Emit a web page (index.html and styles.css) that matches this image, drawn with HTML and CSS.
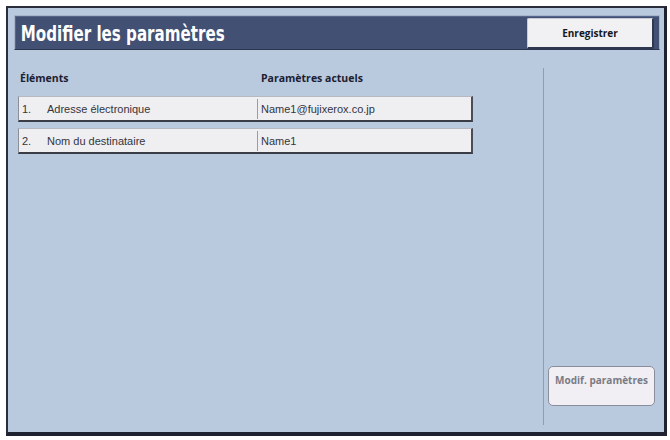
FILE: index.html
```html
<!DOCTYPE html>
<html lang="fr">
<head>
<meta charset="utf-8">
<title>Modifier les paramètres</title>
<link rel="stylesheet" href="styles.css">
</head>
<body>
<div class="frame">
  <div class="screen">
    <div class="header">
      <h1 class="title">Modifier les paramètres</h1>
      <button class="btn-save">Enregistrer</button>
    </div>
    <div class="main">
      <div class="content">
        <div class="col-heads">
          <span class="head-items">Éléments</span>
          <span class="head-values">Paramètres actuels</span>
        </div>
        <div class="row">
          <span class="num">1.</span>
          <span class="label">Adresse électronique</span>
          <span class="value">Name1@fujixerox.co.jp</span>
        </div>
        <div class="row">
          <span class="num">2.</span>
          <span class="label">Nom du destinataire</span>
          <span class="value">Name1</span>
        </div>
      </div>
      <div class="side">
        <button class="btn-modif">Modif. paramètres</button>
      </div>
    </div>
  </div>
</div>
</body>
</html>
```

FILE: styles.css
```css
html, body {
  margin: 0;
  padding: 0;
  background: #ffffff;
}

.frame {
  margin: 6px 0 0 6px;
  width: 656px;
  height: 424px;
  border-left: 2px solid #2a2e3a;
  border-top: 2px solid #2a2e3a;
  border-right: 3px solid #1f2230;
  border-bottom: 4px solid #1f2230;
  background: #b9cadf;
}

.screen {
  height: 100%;
  box-sizing: border-box;
  padding: 7px 4px 0 6px;
  display: flex;
  flex-direction: column;
}

.header {
  height: 35px;
  box-sizing: border-box;
  background: #415073;
  border: 1px solid #a7b4c9;
  border-bottom-color: #2b3550;
  box-shadow: inset 1px 1px 0 #56658a;
  display: flex;
  align-items: flex-start;
  justify-content: space-between;
}

.title {
  display: inline-block;
  margin: 0;
  padding: 7px 0 0 8px;
  font-family: "DejaVu Sans", sans-serif;
  font-weight: bold;
  font-size: 21px;
  line-height: 22px;
  color: #ffffff;
  white-space: nowrap;
  transform: scaleX(0.72);
  transform-origin: 0 0;
}

.btn-save {
  margin: 2px 5px 0 0;
  width: 127px;
  height: 31px;
  box-sizing: border-box;
  background: #f1f0f3;
  border: 1px solid #c9ccd6;
  border-right: 2px solid #30384f;
  border-bottom: 2px solid #30384f;
  border-radius: 2px;
  font-family: "Open Sans", sans-serif;
  font-weight: bold;
  font-size: 10px;
  color: #15171d;
  padding: 0 0 1px 0;
}

.main {
  flex: 1;
  display: flex;
}

.content {
  flex: 1;
  padding: 20px 0 0 4px;
}

.col-heads {
  display: flex;
  height: 16px;
  font-family: "Open Sans", sans-serif;
  font-weight: bold;
  font-size: 10.5px;
  line-height: 16px;
  color: #1c2030;
}

.head-items {
  width: 241px;
  padding-left: 2px;
}

.row {
  width: 455px;
  height: 26px;
  box-sizing: border-box;
  margin-top: 10px;
  background: #efeef1;
  border-top: 1px solid #b6b9c2;
  border-left: 1px solid #8c8f98;
  border-right: 2px solid #4a4d57;
  border-bottom: 2px solid #3a3d46;
  display: flex;
  align-items: center;
  font-family: "Liberation Sans", Arial, sans-serif;
  font-size: 11px;
  color: #33353d;
}

.row + .row {
  margin-top: 6px;
}

.num {
  width: 28px;
  padding-left: 3px;
  box-sizing: border-box;
}

.label {
  width: 210px;
}

.value {
  align-self: stretch;
  margin: 2px 0 1px 0;
  padding-left: 3px;
  border-left: 1px solid #9a9ca4;
  display: flex;
  align-items: center;
}

.side {
  width: 112px;
  margin: 18px 0 7px 0;
  border-left: 1px solid #8d9db5;
  display: flex;
  align-items: flex-end;
  padding: 0 0 19px 4px;
}

.btn-modif {
  width: 107px;
  height: 40px;
  box-sizing: border-box;
  background: #f1eff3;
  border: 1px solid #8a8d9c;
  border-radius: 5px;
  font-family: "Open Sans", sans-serif;
  font-weight: bold;
  font-size: 10px;
  color: #7a7b85;
  display: flex;
  align-items: flex-start;
  justify-content: center;
  padding: 6px 0 0 0;
}
```
